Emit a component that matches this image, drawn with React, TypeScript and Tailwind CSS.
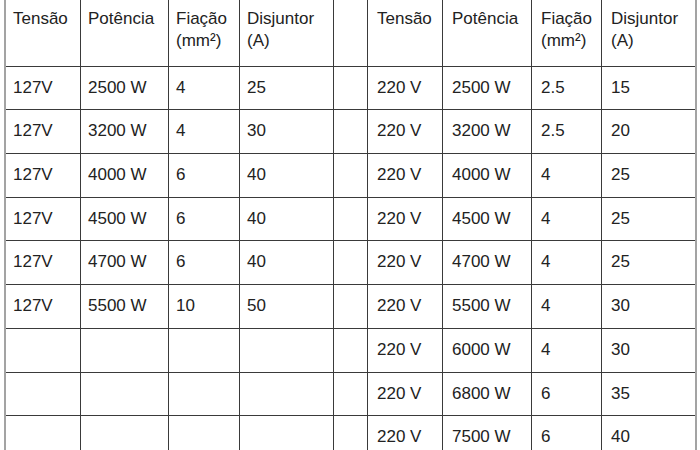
const left = [
  ["127V", "2500 W", "4", "25"],
  ["127V", "3200 W", "4", "30"],
  ["127V", "4000 W", "6", "40"],
  ["127V", "4500 W", "6", "40"],
  ["127V", "4700 W", "6", "40"],
  ["127V", "5500 W", "10", "50"],
  ["", "", "", ""],
  ["", "", "", ""],
  ["", "", "", ""],
]

const right = [
  ["220 V", "2500 W", "2.5", "15"],
  ["220 V", "3200 W", "2.5", "20"],
  ["220 V", "4000 W", "4", "25"],
  ["220 V", "4500 W", "4", "25"],
  ["220 V", "4700 W", "4", "25"],
  ["220 V", "5500 W", "4", "30"],
  ["220 V", "6000 W", "4", "30"],
  ["220 V", "6800 W", "6", "35"],
  ["220 V", "7500 W", "6", "40"],
]

function Header({ side }: { side: "l" | "r" }) {
  const pad = side === "l" ? "pl-[7px]" : "pl-[9px]"
  return (
    <>
      <div className={`bg-white pt-[11px] ${pad}`}>Tensão</div>
      <div className={`bg-white pt-[11px] ${pad}`}>Potência</div>
      <div className={`bg-white pt-[11px] ${pad}`}>Fiação<br />(mm²)</div>
      <div className={`bg-white pt-[11px] ${pad}`}>Disjuntor<br />(A)</div>
    </>
  )
}

export default function App() {
  return (
    <div className="w-[700px] h-[450px] overflow-hidden bg-white">
      <div className="ml-[4px] w-[693px] -mt-[3px] border-x-2 border-[#a3a3a3]">
        <div
          className="grid bg-[#3a3a3a] gap-px grid-cols-[74px_87px_70px_93px_33px_74px_88px_69px_93px] grid-rows-[68.7px_repeat(9,42.7px)] text-[17px] leading-[22.4px] text-[#222] font-['Liberation_Sans',Arial,sans-serif]"
        >
          <Header side="l" />
          <div className="bg-white" />
          <Header side="r" />
          {left.map((row, i) => (
            <div key={i} className="contents">
              {row.map((c, j) => (
                <div key={"l" + j} className="bg-white pt-[10px] pl-[7px] leading-[22.7px]">{c}</div>
              ))}
              <div className="bg-white" />
              {right[i].map((c, j) => (
                <div key={"r" + j} className="bg-white pt-[10px] pl-[9px] leading-[22.7px]">{c}</div>
              ))}
            </div>
          ))}
        </div>
      </div>
    </div>
  )
}
